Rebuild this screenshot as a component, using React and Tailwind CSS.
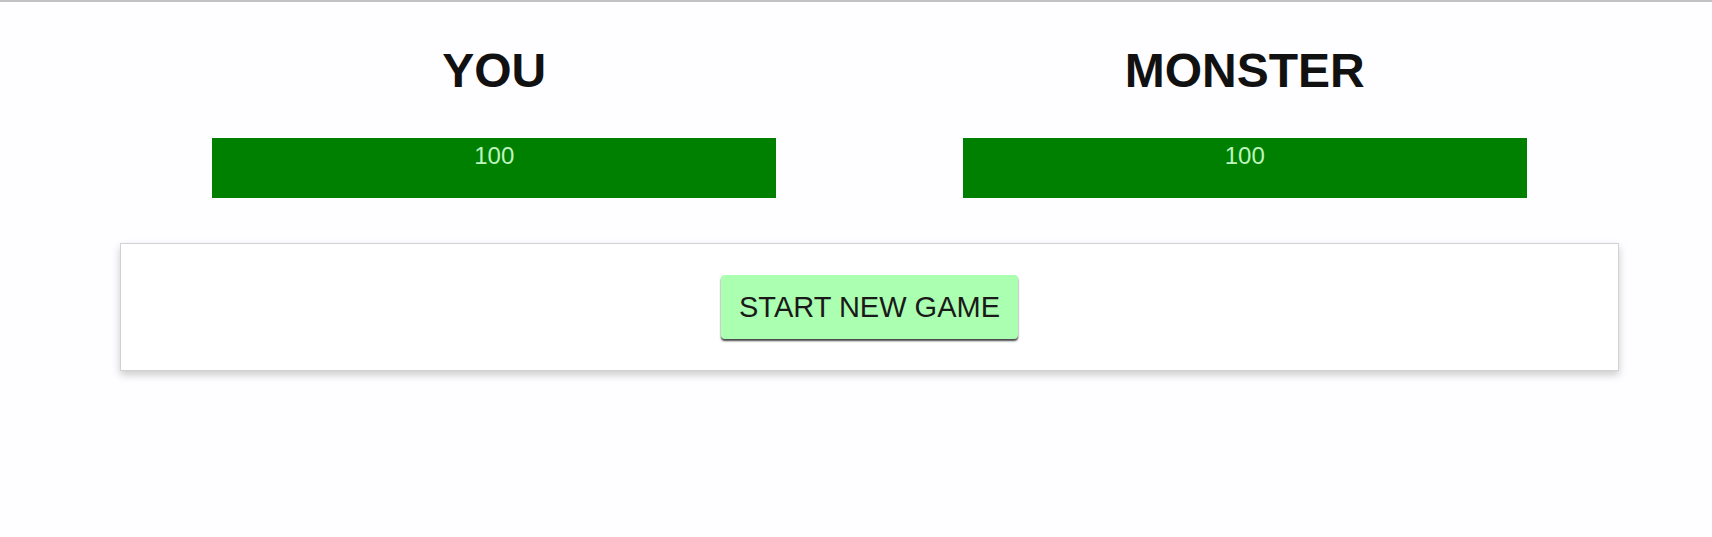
export default function App() {
  const players = ["YOU", "MONSTER"];
  return (
    <div className="min-h-screen bg-[#fefdff] border-t-2 border-[#c2c2c2] font-['Liberation_Sans',Arial,sans-serif]">
      <div className="ml-[120px] w-[1499px]">
        <div className="flex gap-[46px] pl-[22px] pr-[22px] pt-[45px]">
          {players.map((p) => (
            <div key={p} className="flex-1 flex flex-col items-center">
              <h1 className="text-[48px] leading-[48px] font-bold text-[#111111] m-0">{p}</h1>
              <div className="mt-[43px] w-4/5 h-[60px] bg-[#008000] text-center text-[24px] leading-[36px] text-[#bdf5bd]">
                100
              </div>
            </div>
          ))}
        </div>
        <div className="mt-[45px] border border-[#d2d2d2] bg-white shadow-[0_4px_8px_#cccccc] flex justify-center py-[31px]">
          <button className="h-[64px] px-[18px] text-[29px] leading-none bg-[#aaffb0] rounded-[4px] shadow-[0_2px_2px_#444444] text-[#1a1a1a]">
            START NEW GAME
          </button>
        </div>
      </div>
    </div>
  );
}
